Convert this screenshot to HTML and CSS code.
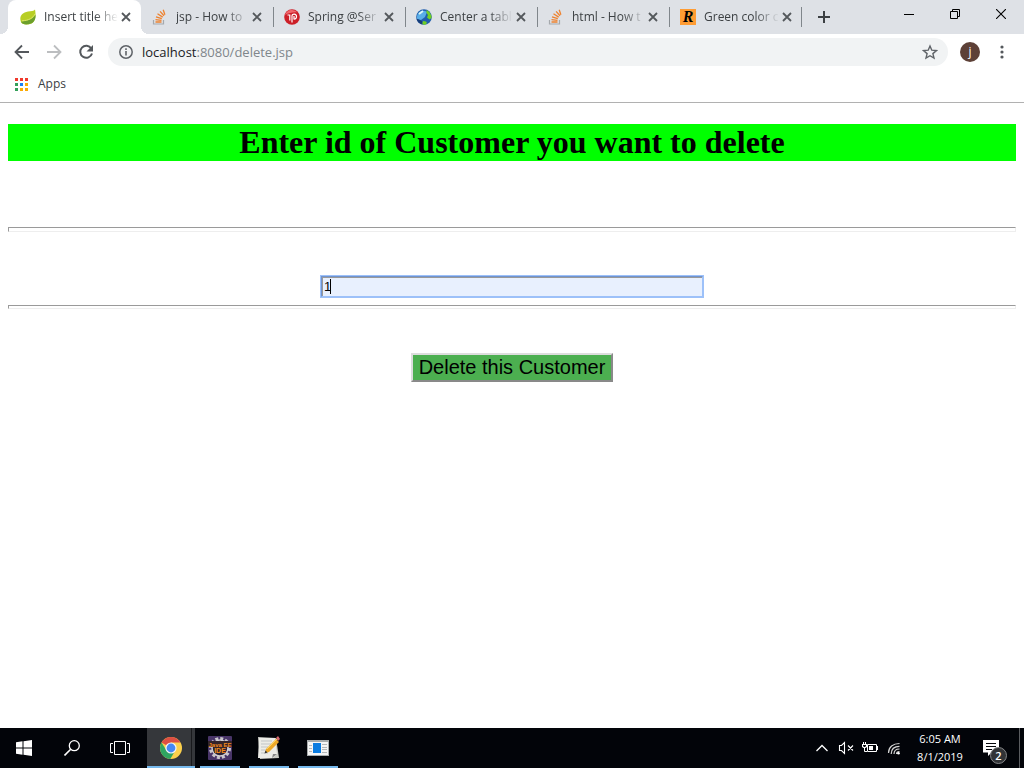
FILE: index.html
```html
<!DOCTYPE html>
<html lang="en">
<head>
<meta charset="utf-8">
<title>Insert title here</title>
<link rel="stylesheet" href="styles.css">
</head>
<body>
<svg class="defs" aria-hidden="true">
  <symbol id="x" viewBox="0 0 10 10"><path d="M1 1l8 8M9 1L1 9" stroke="#54585c" stroke-width="1.8" fill="none"/></symbol>
  <symbol id="so" viewBox="0 0 16 16"><path d="M1.500 11v4h10v-4" fill="none" stroke="#a5a9ad" stroke-width="1.200"/><path d="M3.500 13h6M3.500 10.600l6 .8M4 7.800l5.800 1.900M5.500 4.800l5.200 3.300M8.100 2.400l3.900 4.400M11.200 .8l1.700 5" fill="none" stroke="#ee822f" stroke-width="1.300"/></symbol>
</svg>
<header class="browser">
  <div class="tabstrip">
    <nav class="tabs" aria-label="Tabs">
      <div class="tab active">
        <svg class="fav" viewBox="0 0 16 16"><path d="M15 .5C14 2 11 2 8 2.500 3 3.300.5 6 .3 9.500c0 2 .8 4 1.800 5 3 1.500 8 1.300 10.600-.8C15.800 11 16 6 15 .5z" fill="#b8ce24"/><path d="M15.500 5.500C13 10.500 8 11.500 1 12.700c1 2.500 4 3 7 2.600 6-.8 8-4.800 7.500-9.800z" fill="#6c9f2c"/><path d="M15 5c-2 4-6 6.500-13 6.800" stroke="#dbe66b" fill="none"/></svg>
        <a class="title" href="#">Insert title he</a>
        <button class="close" aria-label="Close tab"><svg viewBox="0 0 10 10"><use href="#x"/></svg></button>
      </div>
      <div class="tab">
        <svg class="fav" viewBox="0 0 16 16"><use href="#so"/></svg>
        <a class="title" href="#">jsp - How to</a>
        <button class="close" aria-label="Close tab"><svg viewBox="0 0 10 10"><use href="#x"/></svg></button>
      </div>
      <div class="tab">
        <svg class="fav" viewBox="0 0 16 16"><circle cx="8" cy="8" r="7.800" fill="#cc1f28"/><path d="M1 6a7.300 7.300 0 0 1 12.500-2.500C9 3 5 4 1 6z" fill="#f0666b"/><path d="M3.500 6h2.300v5.500M8 13.500V7c0-2.800 4.500-2.500 4.500 .5 0 1.800-1.200 2.800-2.500 2.500V7" fill="none" stroke="#fff" stroke-width="1.200"/></svg>
        <a class="title" href="#">Spring @Ser</a>
        <button class="close" aria-label="Close tab"><svg viewBox="0 0 10 10"><use href="#x"/></svg></button>
      </div>
      <div class="tab">
        <svg class="fav" viewBox="0 0 16 16"><circle cx="8" cy="8" r="7.800" fill="#205fad"/><path d="M1 8C1 3 7 0 11 3L9 8l-4 3-4-1z" fill="#59aee8"/><path d="M3 5l4-3" stroke="#d9f5f8" stroke-width="2"/><path d="M10.500 1l3 2 2 4v2l-2 1.500-2.500-2L12 6l-1.500-2zM7 12l3 .5 1 1.500-2 2-3-1z" fill="#71cf25"/><path d="M.5 9.500a7.500 7.500 0 0 0 6 6L6 12z" fill="#173e7c"/></svg>
        <a class="title" href="#">Center a tabl</a>
        <button class="close" aria-label="Close tab"><svg viewBox="0 0 10 10"><use href="#x"/></svg></button>
      </div>
      <div class="tab">
        <svg class="fav" viewBox="0 0 16 16"><use href="#so"/></svg>
        <a class="title" href="#">html - How t</a>
        <button class="close" aria-label="Close tab"><svg viewBox="0 0 10 10"><use href="#x"/></svg></button>
      </div>
      <div class="tab">
        <span class="fav rfav">R</span>
        <a class="title" href="#">Green color c</a>
        <button class="close" aria-label="Close tab"><svg viewBox="0 0 10 10"><use href="#x"/></svg></button>
      </div>
    </nav>
    <button class="newtab" aria-label="New tab"><svg viewBox="0 0 12 12" width="12" height="12"><path d="M6 0v12M0 6h12" stroke="#3c4043" stroke-width="2"/></svg></button>
    <div class="winbtns">
      <button aria-label="Minimize"><svg viewBox="0 0 10 10"><path d="M0 5.500h10" stroke="#000"/></svg></button>
      <button aria-label="Restore"><svg viewBox="0 0 10 10"><path d="M.5 2.500h7v7h-7zM2.500 2.500v-2h7v7h-2" fill="none" stroke="#000"/></svg></button>
      <button aria-label="Close"><svg viewBox="0 0 10 10"><path d="M0 0l10 10M10 0L0 10" stroke="#000" stroke-width="1.100"/></svg></button>
    </div>
  </div>
  <div class="toolbar">
    <button class="nav" aria-label="Back"><svg viewBox="0 0 16 16"><path d="M15 8H2M8 1.500L1.500 8 8 14.500" fill="none" stroke="#54585c" stroke-width="1.800"/></svg></button>
    <button class="nav" aria-label="Forward"><svg viewBox="0 0 16 16"><path d="M1 8h13M8 1.500L14.500 8 8 14.500" fill="none" stroke="#bcbec0" stroke-width="1.800"/></svg></button>
    <button class="nav" aria-label="Reload"><svg viewBox="0 0 16 16"><path d="M13.300 4.500A6 6 0 1 0 14 9.500" fill="none" stroke="#54585c" stroke-width="2"/><path d="M15 1v6.500H8.500z" fill="#54585c"/></svg></button>
    <div class="omnibox">
      <svg class="info" viewBox="0 0 14 14"><circle cx="7" cy="7" r="6.200" fill="none" stroke="#5f6368" stroke-width="1.500"/><path d="M7 6v4.500M7 3.300v1.700" stroke="#5f6368" stroke-width="1.600"/></svg>
      <a class="url" href="#"><b>localhost</b>:8080/delete.jsp</a>
      <button class="star" aria-label="Bookmark"><svg viewBox="0 0 16 16"><path d="M8 2l1.800 4.200 4.600.4-3.500 3 1.100 4.500L8 11.700l-4 2.400 1.100-4.500-3.500-3 4.600-.4z" fill="none" stroke="#5f6368" stroke-width="1.400"/></svg></button>
    </div>
    <button class="avatar">j</button>
    <button class="more" aria-label="Menu"><svg viewBox="0 0 4 14" width="4" height="14"><g fill="#54585c"><circle cx="2" cy="2" r="1.600"/><circle cx="2" cy="7" r="1.600"/><circle cx="2" cy="12" r="1.600"/></g></svg></button>
  </div>
  <div class="bookmarks">
    <a href="#"><svg viewBox="0 0 13 13" width="13" height="13"><path d="M0 0h3v3H0zM5 0h3v3H5zM10 0h3v3h-3z" fill="#f0392c"/><path d="M0 5h3v3H0zM0 10h3v3H0z" fill="#34a05a"/><path d="M5 5h3v3H5z" fill="#1a80f5"/><path d="M10 5h3v3h-3zM5 10h3v3H5zM10 10h3v3h-3z" fill="#fbaa05"/></svg>Apps</a>
  </div>
</header>
<main class="page">
  <h1>Enter id of Customer you want to delete</h1>
  <form>
    <hr class="rule thick">
    <input class="field" type="text" value="1" aria-label="Customer id">
    <hr class="rule">
    <button class="delete" type="button">Delete this Customer</button>
  </form>
</main>
<footer class="taskbar">
  <button class="sys" aria-label="Start"><svg viewBox="0 0 16 16" width="16" height="16"><path d="M0 2.300L6.500 1.300V7.500H0zM7.500 1.200L16 0v7.500H7.500zM0 8.500h6.500v6.200L0 13.800zM7.500 8.500H16V16l-8.500-1.200z" fill="#fff"/></svg></button>
  <button class="sys" aria-label="Search"><svg viewBox="0 0 16 16" width="16" height="16"><circle cx="10.300" cy="5.700" r="5" fill="none" stroke="#fff" stroke-width="1.300"/><path d="M6.700 9.300L.5 15.500" stroke="#fff" stroke-width="1.600"/></svg></button>
  <button class="sys" aria-label="Task view"><svg viewBox="0 0 20 14" width="20" height="14"><path d="M4.500.5h11v13h-11zM3 2.500H.5v9H3M17 2.500h2.500v9H17" fill="none" stroke="#fff"/></svg></button>
  <button class="app current" aria-label="Chrome"><svg viewBox="0 0 24 24" width="24" height="24"><circle cx="12" cy="12" r="11" fill="#fcd04c"/><path d="M12 12L2.500 6.500A11 11 0 0 1 21.500 6.500H12z" fill="#dd4f43"/><path d="M2.500 6.500a11 11 0 0 0 8.800 16.500l5-8.500H7.500z" fill="#2fa461"/><circle cx="12" cy="12" r="5.600" fill="#f5f5f5"/><circle cx="12" cy="12" r="4.400" fill="#4688f4"/></svg></button>
  <button class="app" aria-label="Java EE IDE"><svg viewBox="0 0 24 24" width="24" height="24"><rect width="24" height="24" rx="1" fill="#483568"/><circle cx="12" cy="12" r="9.500" fill="none" stroke="#c9c7cc" stroke-width="3" stroke-dasharray="3 1.970"/><circle cx="12" cy="12" r="8" fill="#292032" stroke="#d0ced2" stroke-width="1.500"/><path d="M0 5h24v6H0zM6 11h12v6H6z" fill="#33242b"/><text x="12" y="10.500" class="ide">Java EE</text><text x="12" y="17" class="ide big">IDE</text></svg></button>
  <button class="app" aria-label="Notepad"><svg viewBox="0 0 24 24" width="24" height="24"><path d="M1 1l18 1 3 20-19 1z" fill="#c9cac4"/><path d="M2 2h16l2 16-4 4H1z" fill="#ecece8"/><path d="M4 5h11M4 8h10M4 11h7M4 14h5M4 17h7" stroke="#c1c5c7"/><path d="M15 22l1-4 4 0z" fill="#888"/><path d="M9 13L19 3l3 3-10 10-4 1z" fill="#eda829"/><path d="M10 13L20 3" stroke="#ffd75b"/><path d="M19 2l2-2 2 3-2 2z" fill="#d86b70"/><path d="M7.500 17.500l1-3 2 2z" fill="#333"/></svg></button>
  <button class="app" aria-label="Viewer"><svg viewBox="0 0 22 16" width="22" height="16"><path d="M0 0h22v16H0z" fill="#a7abac"/><path d="M1 2h20v13H1z" fill="#f5f5f5"/><path d="M6 3h8v10H6z" fill="#0a7be0"/><path d="M2 5.500h3M2 8.500h3M2 11.500h3M15 4.500h5M15 7.500h5M15 9.500h5M15 12.500h5" stroke="#b4b7b8"/></svg></button>
  <div class="tray">
    <button aria-label="Hidden icons"><svg viewBox="0 0 12 8" width="12" height="8"><path d="M.5 7L6 1.500 11.500 7" fill="none" stroke="#fff" stroke-width="1.300"/></svg></button>
    <button aria-label="Volume"><svg viewBox="0 0 16 14" width="16" height="14"><path d="M1.500 4.500h2l3-3v11l-3-3h-2zM10 4.500l5 5M15 4.500l-5 5" fill="none" stroke="#fff" stroke-width="1.100"/></svg></button>
    <button aria-label="Battery"><svg viewBox="0 0 16 12" width="16" height="12"><path d="M5.500 2.500h9v7h-9z" fill="none" stroke="#fff"/><path d="M7 4h4v4H7zM15 4h1v4h-1zM0 2h5v3L3.500 6h-2L0 5zM1 0h1v2H1zM3 0h1v2H3z" fill="#fff"/><path d="M2.500 6v3.500H5" fill="none" stroke="#fff"/><path d="M1 3h3v1L3 5H2L1 4z" fill="#030509"/></svg></button>
    <button aria-label="Network"><svg viewBox="0 0 14 14" width="14" height="14"><g fill="none" stroke="#d5d5d5" stroke-width="1.200"><path d="M1.500 12C1.500 6 6 2.500 12.500 2.500M4.200 13C4.200 8 7.500 5.300 12.500 5.300M7 13c0-3.500 2-5 5.500-5M9.500 13c0-1.500 1-2.500 3-2.500"/></g><circle cx="11.500" cy="12.200" r="1.300" fill="#fff"/></svg></button>
    <button class="clock"><span>6:05 AM</span><span>8/1/2019</span></button>
    <button class="notes" aria-label="Notifications"><svg viewBox="0 0 16 16" width="16" height="16"><path d="M0 0h16v12.500H8.500L5 16v-3.500H0z" fill="#fff"/><path d="M3 3.500h10M3 6.500h10M3 9.500h6" stroke="#05070b"/></svg><span class="badge">2</span></button>
    <button class="desktop" aria-label="Show desktop"></button>
  </div>
</footer>
</body>
</html>
```
FILE: styles.css
```css
* { box-sizing: border-box; }
body {
  margin: 0;
  min-height: 100vh;
  display: flex;
  flex-direction: column;
  background: #fff;
  font: 12px/16px "Open Sans", "Noto Sans", sans-serif;
  color: #3c4043;
}
button { margin: 0; padding: 0; border: 0; background: none; font: inherit; color: inherit; }
a { color: inherit; text-decoration: none; }
svg { display: block; }
.defs { position: absolute; width: 0; height: 0; }

.browser { border-bottom: 1px solid #b1b1b1; }
.tabstrip { display: flex; height: 34px; background: #dee1e6; }
.tabs { display: flex; padding-left: 8px; }
.tab {
  display: flex;
  align-items: center;
  width: 132px;
  padding: 0 11px;
  border-radius: 0;
  background: linear-gradient(#80868b, #80868b) left 7px / 1px 20px no-repeat;
}
.tab:first-child { width: 133px; padding-left: 12px; }
.tab:nth-child(2) { background: none; }
.tab:last-child {
  width: 133px;
  padding-right: 12px;
  background:
    linear-gradient(#80868b, #80868b) left 7px / 1px 20px no-repeat,
    linear-gradient(#80868b, #80868b) right 7px / 1px 20px no-repeat;
}
.tab.active { position: relative; background: #fff; border-radius: 8px 8px 0 0; }
.tab.active::before, .tab.active::after {
  content: "";
  position: absolute;
  bottom: 0;
  width: 8px;
  height: 8px;
}
.tab.active::before { left: -8px; background: radial-gradient(circle at 0 0, transparent 8px, #fff 8px); }
.tab.active::after { right: -8px; background: radial-gradient(circle at 100% 0, transparent 8px, #fff 8px); }
.fav { width: 16px; height: 16px; flex: none; margin-right: 8px; }
.rfav { background: #ff9c33; color: #000; font: italic bold 16px/16px "Liberation Serif", serif; text-align: center; }
.title {
  flex: 1;
  white-space: nowrap;
  -webkit-mask-image: linear-gradient(to right, #000 68%, transparent);
  mask-image: linear-gradient(to right, #000 68%, transparent);
}
.close { flex: none; width: 10px; height: 10px; margin-left: 3px; }
.newtab { width: 44px; display: flex; align-items: center; justify-content: center; }
.winbtns { display: flex; height: 28px; margin-left: auto; }
.winbtns button { width: 46px; display: flex; align-items: center; justify-content: center; }
.winbtns svg { width: 10px; height: 10px; }

.toolbar { display: flex; align-items: center; height: 36px; padding: 0 14px; }
.nav { width: 16px; height: 16px; margin-right: 16px; }
.nav:nth-child(3) { margin-right: 14px; }
.omnibox {
  flex: 1;
  display: flex;
  align-items: center;
  height: 28px;
  padding: 0 10px 0 11px;
  border-radius: 14px;
  background: #f1f3f4;
}
.info { width: 14px; height: 14px; margin-right: 9px; }
.url { flex: 1; font-size: 13px; line-height: 20px; color: #80868b; }
.url b { font-weight: 400; color: #202124; }
.star { width: 16px; height: 16px; }
.avatar { width: 20px; height: 20px; margin: 0 20px 0 12px; border-radius: 50%; background: #5d4037; color: #fff; }
.more { width: 4px; margin-right: 6px; }
.bookmarks { height: 32px; padding: 6px 15px; }
.bookmarks a { display: inline-flex; align-items: center; gap: 10px; }

.page { flex: 1; padding: 0 8px; font: 16px/18px "Liberation Serif", serif; color: #000; text-align: center; }
.page h1 { margin: 21px 0 66px; font-size: 32px; line-height: 37px; background: #0f0; }
.rule { height: 4px; margin: 0; border: 1px inset #eee; }
.rule.thick { height: 5px; margin-bottom: 44px; }
.field {
  display: block;
  width: calc(38% - 1px);
  height: 21px;
  margin: 0 auto 8px;
  padding: 1px 2px;
  border: 1px solid #9dc1f9;
  border-top-color: #6f93d0;
  border-left-color: #6f93d0;
  border-radius: 0;
  outline: 1px solid #9dc1f9;
  background: #e8f0fe linear-gradient(#000, #000) 8px 2px / 1px 15px no-repeat;
  box-shadow: inset 1px 1px #999;
  font: 13px/15px "Liberation Sans", sans-serif;
}
.delete {
  margin-top: 44px;
  padding: 1px 6px;
  border: 2px outset #ddd;
  background: #4caf50;
  color: #000;
  font: 20px/23px "Liberation Sans", sans-serif;
}

.taskbar { display: flex; height: 40px; background: #020409; color: #fff; }
.taskbar button { display: flex; align-items: center; justify-content: center; }
.sys { width: 48px; }
.app { width: 40px; margin-right: 9px; border-bottom: 2px solid #76b9ed; padding-top: 2px; }
.app.current { width: 48px; margin: 0 5px 0 3px; background: linear-gradient(to right, #35373b 44px, #18191c 44px, #18191c 45px, #35373b 45px); }
.ide { font: bold 6px "Liberation Sans", sans-serif; fill: #f48a1c; text-anchor: middle; }
.ide.big { font-size: 7px; }
.tray { display: flex; margin-left: auto; }
.tray button { width: 24px; }
.tray .clock { width: 66px; padding-right: 4px; margin-left: 3px; flex-direction: column; font-size: 11px; line-height: 18px; }
.tray .notes { position: relative; width: 44px; padding-right: 12px; }
.badge {
  position: absolute;
  left: 15px;
  top: 19px;
  width: 17px;
  height: 17px;
  border: 1px solid #858688;
  border-radius: 50%;
  background: #313336;
  font-size: 11px;
  font-weight: 600;
  line-height: 15px;
}
.tray .desktop { width: 5px; border-left: 1px solid #5a5c60; }
```
